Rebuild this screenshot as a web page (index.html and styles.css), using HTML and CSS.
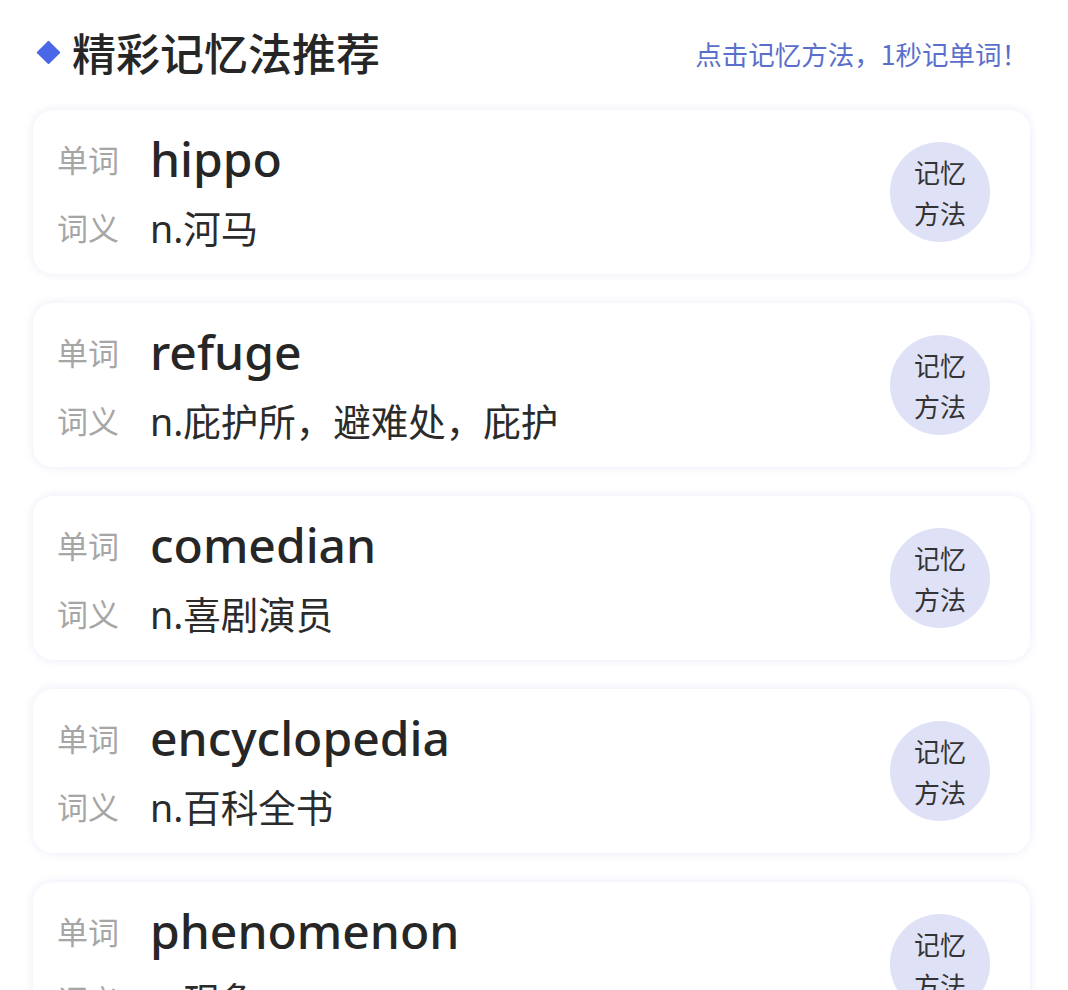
FILE: index.html
```html
<!DOCTYPE html>
<html lang="zh-CN">
<head>
<meta charset="utf-8">
<link rel="stylesheet" href="styles.css">
</head>
<body>
<div class="page">
  <div class="header">
    <div class="title"><span class="diamond"></span><span class="title-text">精彩记忆法推荐</span></div>
    <div class="hint">点击记忆方法，1秒记单词！</div>
  </div>
  <div class="list">
    <div class="card">
      <div class="info">
        <div class="row"><span class="label">单词</span><span class="word">hippo</span></div>
        <div class="row"><span class="label">词义</span><span class="meaning">n.河马</span></div>
      </div>
      <div class="btn">记忆<br>方法</div>
    </div>
    <div class="card">
      <div class="info">
        <div class="row"><span class="label">单词</span><span class="word">refuge</span></div>
        <div class="row"><span class="label">词义</span><span class="meaning">n.庇护所，避难处，庇护</span></div>
      </div>
      <div class="btn">记忆<br>方法</div>
    </div>
    <div class="card">
      <div class="info">
        <div class="row"><span class="label">单词</span><span class="word">comedian</span></div>
        <div class="row"><span class="label">词义</span><span class="meaning">n.喜剧演员</span></div>
      </div>
      <div class="btn">记忆<br>方法</div>
    </div>
    <div class="card">
      <div class="info">
        <div class="row"><span class="label">单词</span><span class="word">encyclopedia</span></div>
        <div class="row"><span class="label">词义</span><span class="meaning">n.百科全书</span></div>
      </div>
      <div class="btn">记忆<br>方法</div>
    </div>
    <div class="card">
      <div class="info">
        <div class="row"><span class="label">单词</span><span class="word">phenomenon</span></div>
        <div class="row"><span class="label">词义</span><span class="meaning">n.现象</span></div>
      </div>
      <div class="btn">记忆<br>方法</div>
    </div>
  </div>
</div>
</body>
</html>
```

FILE: styles.css
```css
html, body {
  margin: 0;
  padding: 0;
  background: #ffffff;
}
body {
  font-family: "Noto Sans", "Noto Sans CJK SC", sans-serif;
  color: #262626;
  overflow: hidden;
  height: 990px;
}
.page {
  padding: 0 38px 0 33px;
}
.header {
  display: flex;
  align-items: center;
  justify-content: space-between;
  padding: 24px 2px 0 4px;
  height: 56px;
  margin-bottom: 30px;
}
.title {
  display: flex;
  align-items: center;
}
.diamond {
  width: 17px;
  height: 17px;
  background: #4a67e8;
  transform: rotate(45deg);
  margin: 0 15px 0 3px;
  border-radius: 1px;
}
.title-text {
  font-family: "Noto Sans CJK SC", sans-serif;
  font-size: 44px;
  font-weight: 500;
  line-height: 56px;
  color: #262626;
}
.hint {
  font-family: "Noto Sans CJK SC", sans-serif;
  font-size: 26.5px;
  color: #5a6fcc;
  line-height: 36px;
  padding-top: 4px;
}
.list {
  display: flex;
  flex-direction: column;
  gap: 29px;
}
.card {
  display: flex;
  align-items: center;
  justify-content: space-between;
  background: #fff;
  border-radius: 20px;
  padding: 20px 40px 20px 24px;
  box-shadow: 0 0 9px rgba(120, 120, 220, 0.16);
  height: 124px;
}
.info {
  display: flex;
  flex-direction: column;
  gap: 12px;
}
.row {
  display: flex;
  align-items: center;
  height: 56px;
}
.label {
  font-family: "Noto Sans CJK SC", sans-serif;
  font-size: 31px;
  color: #a6a6a6;
  width: 93px;
  flex: none;
}
.word {
  font-family: "Noto Sans", sans-serif;
  font-size: 48px;
  font-weight: 500;
  color: #262626;
}
.meaning {
  font-family: "Noto Sans", "Noto Sans CJK SC", sans-serif;
  font-size: 37.5px;
  color: #2b2b2b;
}
.btn {
  width: 100px;
  height: 100px;
  border-radius: 50%;
  background: #dfe1f7;
  display: flex;
  align-items: center;
  justify-content: center;
  text-align: center;
  font-family: "Noto Sans CJK SC", sans-serif;
  font-size: 26px;
  line-height: 41px;
  color: #333;
  flex: none;
}
```
